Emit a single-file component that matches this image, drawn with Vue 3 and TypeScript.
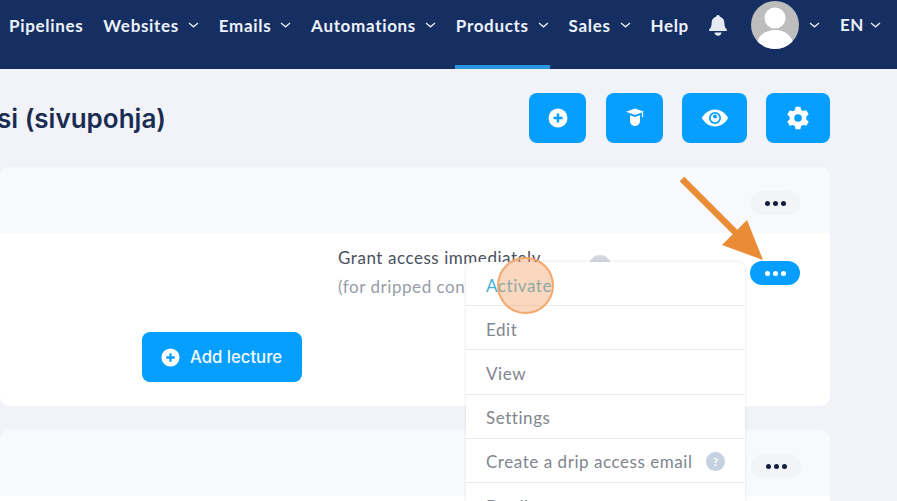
<template>
  <div class="page">
    <header class="topbar">
      <nav class="nav">
        <a
          v-for="item in navItems"
          :key="item.label"
          class="nav-item"
          :class="{ active: item.active, 'has-caret': item.caret }"
        >
          <span>{{ item.label }}</span>
          <svg v-if="item.caret" class="caret" viewBox="0 0 11 6"><path d="M1 1l4.500 3.800L10 1" /></svg>
        </a>
      </nav>
      <svg class="bell" viewBox="0 0 20 21">
        <path d="M10 0a2 2 0 0 1 2 1.700c3 .8 4.400 3.300 4.400 6.300 0 3.500.9 5 2.400 6.500.5.600.2 1.500-.7 1.500H1.900c-.9 0-1.200-.9-.7-1.500C2.700 13 3.600 11.500 3.600 8c0-3 1.400-5.500 4.400-6.300A2 2 0 0 1 10 0z" />
        <path d="M6.500 17.500h7c0 2-1.500 3.200-3.500 3.200s-3.500-1.200-3.500-3.200z" />
      </svg>
      <div class="avatar">
        <svg viewBox="0 0 48 48">
          <circle cx="24" cy="17" r="10.500" />
          <path d="M5 48c0-12 8-19 19-19s19 7 19 19z" />
        </svg>
      </div>
      <svg class="caret user-caret" viewBox="0 0 11 6"><path d="M1 1l4.500 3.800L10 1" /></svg>
      <span class="lang">EN</span>
      <svg class="caret lang-caret" viewBox="0 0 11 6"><path d="M1 1l4.500 3.800L10 1" /></svg>
    </header>

    <main class="content">
      <div class="title-row">
        <h1 class="title">si (sivupohja)</h1>
        <div class="actions">
          <button class="action narrow">
            <svg viewBox="0 0 20 20"><circle cx="10" cy="10" r="9.500" fill="#fff" /><path d="M10 5.500v9M5.500 10h9" stroke="#069fff" stroke-width="2.400" /></svg>
          </button>
          <button class="action narrow">
            <svg viewBox="0 0 20 20">
              <path d="M10 .5l9 3.200-9 3.200-9-3.200z" fill="#fff" />
              <path d="M5 7.300l5 1.700 5-1.700v5.200c0 3.200-2 5.500-5 5.500s-5-2.300-5-5.500z" fill="#fff" />
              <path d="M17.500 4.200v5" stroke="#fff" stroke-width="1.300" />
            </svg>
          </button>
          <button class="action wide">
            <svg class="eye" viewBox="0 0 28 18">
              <path d="M14 .5C8 .5 3.500 4.500.8 9c2.700 4.500 7.200 8.500 13.200 8.500S24.500 13.500 27.200 9C24.500 4.500 20 .5 14 .5z" fill="#fff" />
              <circle cx="14" cy="9" r="6" fill="#069fff" />
              <circle cx="14" cy="9" r="4.300" fill="#fff" />
              <circle cx="14" cy="7.500" r="2" fill="#069fff" />
            </svg>
          </button>
          <button class="action gear">
            <svg viewBox="0 0 24 24">
              <path fill="#fff" fill-rule="evenodd" d="M9.600.8h4.800l.8 3.200 1.900 1.100 3.200-.9 2.400 4.100-2.400 2.300v2.800l2.400 2.300-2.400 4.100-3.200-.9-1.900 1.100-.8 3.200H9.600l-.8-3.200-1.900-1.100-3.200.9L1.300 15.500l2.400-2.300v-2.400L1.300 8.500l2.400-4.100 3.200.9L8.800 4.200zM12 8.200a3.800 3.800 0 1 0 0 7.600 3.800 3.800 0 0 0 0-7.600z" />
            </svg>
          </button>
        </div>
      </div>

      <section class="card">
        <div class="card-head">
          <button class="dots"><i /><i /><i /></button>
        </div>
        <div class="card-body">
          <div class="access-row">
            <div class="access">
              <div class="access-title">Grant access immediately</div>
              <div class="access-note">(for dripped cont</div>
            </div>
            <span class="hint-behind" />
            <button class="dots blue"><i /><i /><i /></button>
          </div>
          <button class="add-lecture">
            <svg viewBox="0 0 20 20"><circle cx="10" cy="10" r="9.500" fill="#fff" /><path d="M10 5.500v9M5.500 10h9" stroke="#069fff" stroke-width="2.400" /></svg>
            Add lecture
          </button>
        </div>
      </section>

      <section class="card second">
        <div class="card-head low">
          <button class="dots"><i /><i /><i /></button>
        </div>
        <div class="card-body" />
      </section>
    </main>

    <ul class="menu">
      <li v-for="entry in menuItems" :key="entry" class="menu-item" :class="{ current: entry === 'Activate' }">
        <span>{{ entry }}</span>
        <b v-if="entry.startsWith('Create')" class="help">?</b>
      </li>
    </ul>

    <span class="click-mark" />

    <svg class="arrow" viewBox="0 0 897 501">
      <path d="M682 179l55 55" stroke="#ea8b35" stroke-width="6.500" fill="none" />
      <path d="M763 260l-41-15 25-25z" fill="#ea8b35" />
    </svg>
  </div>
</template>

<script setup lang="ts">
interface NavItem {
  label: string;
  caret: boolean;
  active?: boolean;
}

const navItems: NavItem[] = [
  { label: 'Pipelines', caret: false },
  { label: 'Websites', caret: true },
  { label: 'Emails', caret: true },
  { label: 'Automations', caret: true },
  { label: 'Products', caret: true, active: true },
  { label: 'Sales', caret: true },
  { label: 'Help', caret: false },
];

const menuItems = ['Activate', 'Edit', 'View', 'Settings', 'Create a drip access email', 'Duplicate'];
</script>

<style>
html,
body {
  margin: 0;
  overflow: hidden;
}
</style>

<style scoped>
.page {
  position: relative;
  width: 897px;
  height: 501px;
  overflow: hidden;
  background: #f1f3f8;
  font-family: Lato, "Noto Sans", sans-serif;
}

.topbar {
  display: flex;
  align-items: flex-start;
  height: 69px;
  padding-left: 9px;
  background: #152f63;
  color: #eef2fa;
}

.nav {
  display: flex;
  height: 69px;
}

.nav-item {
  position: relative;
  display: flex;
  align-items: center;
  height: 50px;
  padding-right: 20px;
  font-size: 17px;
  font-weight: 700;
  letter-spacing: 0.68px;
}

.nav-item.has-caret {
  padding-right: 19.800px;
}

.nav-item .caret {
  margin: 0 0 0 9px;
}

.nav-item.active::after {
  content: "";
  position: absolute;
  left: -1px;
  right: 19px;
  top: 65px;
  height: 4px;
  background: #2a97e0;
}

.caret {
  width: 11px;
  height: 6px;
  flex: none;
}

.caret path {
  fill: none;
  stroke: #e6ebf5;
  stroke-width: 1.300;
}

.bell {
  width: 20px;
  height: 21px;
  margin: 15px 0 0 -1px;
  fill: #e6ebf3;
}

.avatar {
  width: 48px;
  height: 48px;
  margin: 1px 0 0 23px;
  border-radius: 50%;
  overflow: hidden;
  background: #bdbdbd;
}

.avatar svg {
  display: block;
  fill: #fff;
}

.user-caret {
  margin: 22px 0 0 10px;
}

.lang {
  margin-left: 20px;
  line-height: 50px;
  font-size: 17px;
  font-weight: 700;
  letter-spacing: 0.7px;
}

.lang-caret {
  margin: 22px 0 0 6px;
}

.content {
  width: 830px;
}

.title-row {
  display: flex;
  justify-content: space-between;
  align-items: center;
  height: 50px;
  margin-top: 24px;
}

.title {
  margin: 0 0 0 -3px;
  font-family: Inter, sans-serif;
  font-size: 26px;
  font-weight: 600;
  color: #1b2c52;
}

.actions {
  display: flex;
  gap: 20px;
}

.action {
  display: flex;
  align-items: center;
  justify-content: center;
  height: 50px;
  padding: 0;
  border: none;
  border-radius: 8px;
  background: #069fff;
}

.action.narrow {
  width: 57px;
}

.action.wide {
  width: 65px;
  margin-left: -1px;
}

.action.gear {
  width: 64px;
  margin-left: -1px;
}

.action svg {
  width: 20px;
  height: 20px;
}

.action .eye {
  width: 28px;
  height: 18px;
}

.action.gear svg {
  width: 24px;
  height: 24px;
}

.card {
  margin-top: 24px;
  border-radius: 10px;
  overflow: hidden;
  background: #fff;
}

.card-head {
  display: flex;
  justify-content: flex-end;
  height: 66px;
  padding: 24px 30px 0 0;
  box-sizing: border-box;
  background: #f8f9fb;
}

.card-body {
  height: 173px;
}

.second {
  margin-top: 24px;
}

.card-head.low {
  padding: 24px 29px 0 0;
}

.dots {
  display: flex;
  align-items: center;
  justify-content: center;
  gap: 3px;
  width: 50px;
  height: 24px;
  padding: 0;
  border: none;
  border-radius: 12px;
  background: #f3f4f7;
}

.dots i {
  width: 5px;
  height: 5px;
  border-radius: 50%;
  background: #15203f;
}

.dots.blue {
  background: #069fff;
}

.dots.blue i {
  background: #fff;
}

.access-row {
  display: flex;
  align-items: flex-start;
  height: 99px;
  padding: 14px 30px 0 338px;
  box-sizing: border-box;
}

.access {
  width: 250px;
  font-size: 17px;
  letter-spacing: 0.55px;
  white-space: nowrap;
}

.access-title {
  line-height: 22px;
  color: #4a515e;
}

.access-note {
  margin-top: 7px;
  line-height: 22px;
  color: #979da9;
}

.hint-behind {
  width: 22px;
  height: 22px;
  margin: 8px auto 0 1px;
  border-radius: 50%;
  background: #d3d7dd;
}

.access-row .dots {
  margin-top: 14px;
}

.add-lecture {
  display: flex;
  align-items: center;
  gap: 10px;
  width: 160px;
  height: 50px;
  margin-left: 142px;
  padding: 0 0 0 19px;
  border: none;
  border-radius: 8px;
  background: #069fff;
  color: #f4faff;
  font-family: Inter, sans-serif;
  font-size: 16.700px;
  font-weight: 500;
}

.add-lecture svg {
  width: 19px;
  height: 19px;
}

.menu {
  position: absolute;
  left: 466px;
  top: 262px;
  width: 279px;
  margin: 0;
  padding: 0;
  list-style: none;
  background: #fff;
  border-radius: 8px 8px 0 0;
  box-shadow: 0 0 3px rgba(40, 50, 80, 0.14);
}

.menu-item {
  display: flex;
  align-items: center;
  justify-content: space-between;
  height: 44.200px;
  padding: 3px 20px 0;
  box-sizing: border-box;
  border-bottom: 1px solid #e9ebef;
  font-size: 17px;
  letter-spacing: 0.55px;
  color: #7f868f;
}

.menu-item.current {
  color: #43b1d6;
}

.help {
  display: flex;
  align-items: center;
  justify-content: center;
  width: 19px;
  height: 19px;
  border-radius: 50%;
  background: #c5d0e0;
  color: #fff;
  font-size: 12px;
  letter-spacing: 0;
}

.click-mark {
  position: absolute;
  left: 497px;
  top: 257px;
  width: 53px;
  height: 53px;
  border-radius: 50%;
  border: 2px solid #f3a76c;
  background: rgba(243, 160, 100, 0.42);
}

.arrow {
  position: absolute;
  inset: 0;
  width: 897px;
  height: 501px;
  pointer-events: none;
}
</style>
